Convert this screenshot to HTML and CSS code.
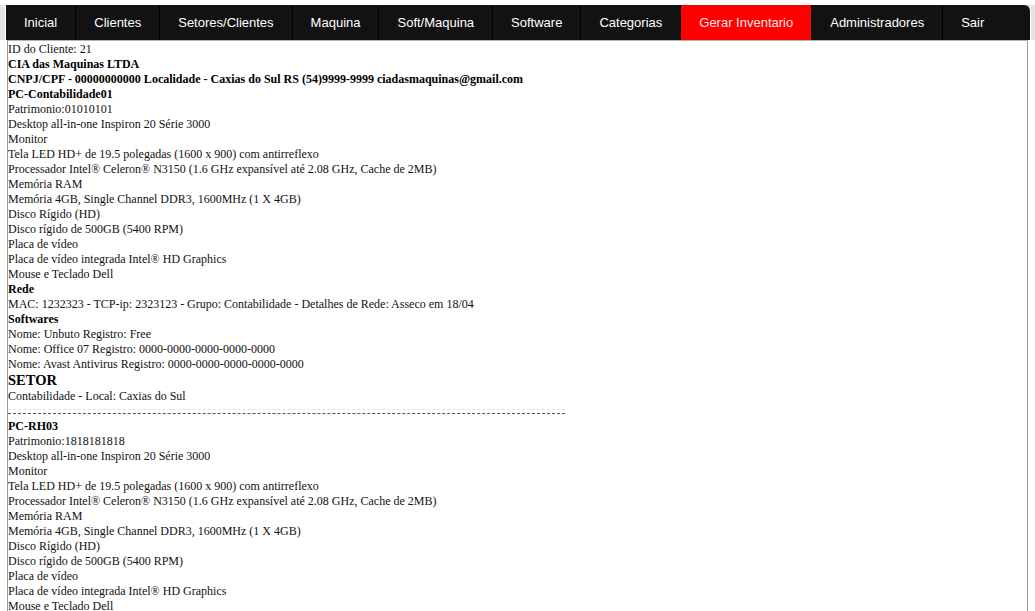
FILE: index.html
```html
<!DOCTYPE html>
<html lang="pt-BR">
<head>
<meta charset="utf-8">
<title>Gerar Inventario</title>
<link rel="stylesheet" href="styles.css">
</head>
<body>
<div class="topbar">
  <ul class="menu">
    <li><a href="#">Inicial</a></li>
    <li><a href="#">Clientes</a></li>
    <li><a href="#">Setores/Clientes</a></li>
    <li><a href="#">Maquina</a></li>
    <li><a href="#">Soft/Maquina</a></li>
    <li><a href="#">Software</a></li>
    <li><a href="#">Categorias</a></li>
    <li class="active"><a href="#">Gerar Inventario</a></li>
    <li><a href="#">Administradores</a></li>
    <li class="last"><a href="#">Sair</a></li>
  </ul>
</div>
<div class="content">
  <div>ID do Cliente: 21</div>
  <div class="b">CIA das Maquinas LTDA</div>
  <div class="b">CNPJ/CPF - 00000000000 Localidade - Caxias do Sul RS (54)9999-9999 ciadasmaquinas@gmail.com</div>

  <div class="b">PC-Contabilidade01</div>
  <div>Patrimonio:01010101</div>
  <div>Desktop all-in-one Inspiron 20 Série 3000</div>
  <div>Monitor</div>
  <div>Tela LED HD+ de 19.5 polegadas (1600 x 900) com antirreflexo</div>
  <div>Processador Intel® Celeron® N3150 (1.6 GHz expansível até 2.08 GHz, Cache de 2MB)</div>
  <div>Memória RAM</div>
  <div>Memória 4GB, Single Channel DDR3, 1600MHz (1 X 4GB)</div>
  <div>Disco Rígido (HD)</div>
  <div>Disco rígido de 500GB (5400 RPM)</div>
  <div>Placa de vídeo</div>
  <div>Placa de vídeo integrada Intel® HD Graphics</div>
  <div>Mouse e Teclado Dell</div>
  <div class="b">Rede</div>
  <div>MAC: 1232323 - TCP-ip: 2323123 - Grupo: Contabilidade - Detalhes de Rede: Asseco em 18/04</div>
  <div class="b">Softwares</div>
  <div>Nome: Unbuto Registro: Free</div>
  <div>Nome: Office 07 Registro: 0000-0000-0000-0000-0000</div>
  <div>Nome: Avast Antivirus Registro: 0000-0000-0000-0000-0000</div>
  <div class="setor">SETOR</div>
  <div>Contabilidade - Local: Caxias do Sul</div>
  <hr class="sep">

  <div class="b">PC-RH03</div>
  <div>Patrimonio:1818181818</div>
  <div>Desktop all-in-one Inspiron 20 Série 3000</div>
  <div>Monitor</div>
  <div>Tela LED HD+ de 19.5 polegadas (1600 x 900) com antirreflexo</div>
  <div>Processador Intel® Celeron® N3150 (1.6 GHz expansível até 2.08 GHz, Cache de 2MB)</div>
  <div>Memória RAM</div>
  <div>Memória 4GB, Single Channel DDR3, 1600MHz (1 X 4GB)</div>
  <div>Disco Rígido (HD)</div>
  <div>Disco rígido de 500GB (5400 RPM)</div>
  <div>Placa de vídeo</div>
  <div>Placa de vídeo integrada Intel® HD Graphics</div>
  <div>Mouse e Teclado Dell</div>
</div>
</body>
</html>
```

FILE: styles.css
```css
html, body {
  margin: 0;
  padding: 0;
  background: #ffffff;
  overflow: hidden;
}

.topbar {
  margin-top: 5px;
  height: 35px;
  background: #e4e4e4;
  padding: 0 4px 0 5px;
}

.menu {
  list-style: none;
  margin: 0;
  padding: 0;
  height: 35px;
  display: flex;
  background: #121212;
  border-left: 1px solid #ffffff;
  border-right: 1px solid #ffffff;
  border-top-right-radius: 6px;
  font-family: "Liberation Sans", Arial, sans-serif;
  font-size: 13px;
}

.menu li {
  border-right: 1px solid #000000;
  display: flex;
}

.menu li.last {
  border-right: none;
  flex: 1;
}

.menu a {
  display: block;
  color: #ffffff;
  text-decoration: none;
  line-height: 35px;
  padding: 0 18px;
}

.menu li.last a {
  padding-left: 18px;
}

.menu li.active {
  background: #ff0000;
}

.menu li.active a {
  color: #ffe8e8;
}

.content {
  margin-left: 7px;
  width: 1019px;
  padding-top: 1px;
  border-top: 1px solid #b4b4b4;
  border-left: 1px solid #9a9a9a;
  border-right: 1px solid #9a9a9a;
  font-family: "Liberation Serif", "Times New Roman", serif;
  font-size: 12px;
  line-height: 15px;
  color: #111111;
  height: 570px;
}

.b {
  font-weight: bold;
  color: #000000;
}

.setor {
  font-weight: bold;
  font-size: 14.5px;
  line-height: 17px;
  color: #000000;
}

.sep {
  width: 557px;
  margin: 5px 0 5px 0;
  height: 3px;
  border: none;
  border-top: 1px dashed #e2e2e2;
  border-bottom: 1px dashed #555555;
}
```
